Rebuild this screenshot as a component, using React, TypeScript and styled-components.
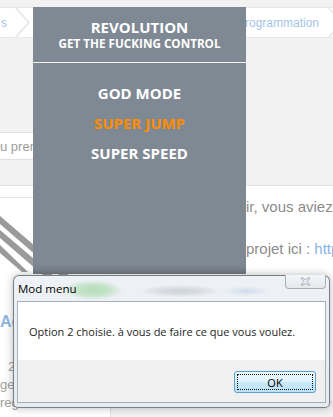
import React from 'react';
import styled, { createGlobalStyle } from 'styled-components';

const Global = createGlobalStyle`
  html, body { margin: 0; padding: 0; }
  body { background: #f2f2f2; font-family: "Liberation Sans", Arial, sans-serif; }
`;

const Screen = styled.div`
  position: relative;
  width: 333px;
  height: 417px;
  overflow: hidden;
  background: #f2f2f2;
`;

const Page = styled.div`
  display: flex;
  flex-direction: column;
  padding-top: 7px;
`;

const Breadcrumb = styled.nav`
  height: 29px;
  background: #fff;
  border-top: 1px solid #e8e8e8;
  border-bottom: 1px solid #e8e8e8;
  display: flex;
  align-items: center;
  font-size: 12px;
  color: #a5c4ea;
`;

const Crumb = styled.span<{ $pl?: number; $pr?: number }>`
  padding-left: ${(p) => p.$pl ?? 0}px;
  padding-right: ${(p) => p.$pr ?? 0}px;
  white-space: nowrap;
`;

const Spacer = styled.div`
  flex: 1;
`;

const Chevron = ({ w = 17 }: { w?: number }) => (
  <svg width={w} height="29" viewBox={`0 0 ${w} 29`} style={{ flex: 'none' }}>
    <polyline points="1,-1 15,14.5 1,30" fill="none" stroke="#e4e4e4" strokeWidth="1.4" />
  </svg>
);

const SearchRow = styled.div`
  margin-top: 94px;
  display: flex;
`;

const SearchInput = styled.div`
  width: 40px;
  height: 26px;
  background: #fff;
  border: 1px solid #e0e0e0;
  border-left: none;
  display: flex;
  align-items: center;
  font-size: 13px;
  color: #9c9c9c;
  white-space: nowrap;
  overflow: hidden;
`;

const Content = styled.div`
  margin-top: 25px;
  display: flex;
  height: 240px;
`;

const Sidebar = styled.aside`
  width: 110px;
  background: #fff;
  border-top: 1px solid #e2e2e2;
  border-right: 1px solid #e2e2e2;
  display: flex;
  flex-direction: column;
`;

const SideHeader = styled.div`
  height: 11px;
  border-bottom: 1px solid #e4e4e4;
`;

const Stripes = styled.div`
  margin-top: 18px;
  height: 60px;
`;

const SideTitle = styled.div`
  margin-top: 36px;
  width: 14px;
  overflow: hidden;
  line-height: 20px;
  font-size: 16px;
  font-weight: 700;
  color: #8fb6df;
  white-space: nowrap;
`;

const StatList = styled.div`
  margin-top: 26px;
  display: flex;
  flex-direction: column;
`;

const Stat = styled.div<{ $pl?: number }>`
  line-height: 18px;
  font-size: 13px;
  color: #a0a0a0;
  padding-left: ${(p) => p.$pl ?? 0}px;
  white-space: nowrap;
`;

const Main = styled.main`
  flex: 1;
  min-width: 0;
  display: flex;
  flex-direction: column;
`;

const Card = styled.div`
  height: 215px;
  background: #fff;
  border-top: 1px solid #e2e2e2;
  padding: 11px 0 0 135px;
  box-sizing: border-box;
  display: flex;
  flex-direction: column;
  gap: 22px;
  overflow: hidden;
`;

const Line = styled.p`
  margin: 0;
  line-height: 20px;
  font-size: 15px;
  color: #8c8c8c;
  white-space: nowrap;
`;

const Link = styled.span`
  color: #86b3e3;
`;

/* ---------- Mod menu overlay ---------- */

const Panel = styled.div`
  position: absolute;
  left: 33px;
  top: 7px;
  width: 213px;
  height: 267px;
  background: linear-gradient(to bottom, #7f8994 0%, #7f8994 96%, #717a84 100%);
  font-family: "Open Sans", "Noto Sans", sans-serif;
  color: #fff;
  display: flex;
  flex-direction: column;
  text-align: center;
`;

const PanelHeader = styled.header`
  height: 56px;
  box-sizing: border-box;
  padding-top: 11px;
  border-bottom: 1px solid #f2f2f2;
`;

const PanelTitle = styled.div`
  font-weight: 700;
  font-size: 15px;
  line-height: 18px;
`;

const PanelSub = styled.div`
  font-weight: 700;
  font-size: 11.7px;
  line-height: 14px;
`;

const Menu = styled.ul`
  list-style: none;
  margin: 0;
  padding: 15px 0 0;
`;

const MenuItem = styled.li<{ $active?: boolean }>`
  font-weight: 700;
  font-size: 15px;
  line-height: 30px;
  color: ${(p) => (p.$active ? '#ff8c00' : '#ffffff')};
`;

/* ---------- Windows dialog ---------- */

const Dialog = styled.div`
  position: absolute;
  left: 13px;
  top: 275px;
  width: 317px;
  height: 133px;
  box-sizing: border-box;
  border: 1px solid rgba(90, 98, 108, 0.8);
  border-radius: 6px 6px 5px 5px;
  padding: 0 3px 4px 3px;
  display: flex;
  flex-direction: column;
  box-shadow: 0 0 9px rgba(0, 0, 0, 0.28);
  background:
    radial-gradient(ellipse 30px 10px at 79px 14px, rgba(150, 210, 150, 0.65) 0%, rgba(150, 210, 150, 0.45) 55%, rgba(150, 210, 150, 0) 100%),
    radial-gradient(ellipse 40px 6px at 166px 15px, rgba(160, 165, 175, 0.4) 0%, rgba(160, 165, 175, 0.25) 55%, rgba(160, 165, 175, 0) 100%),
    radial-gradient(ellipse 24px 5px at 232px 15px, rgba(150, 180, 215, 0.35) 0%, rgba(150, 180, 215, 0) 100%),
    linear-gradient(to bottom, #eef2f6 0%, #e6ebf0 100%);
  font-family: "Open Sans", "Noto Sans", sans-serif;
  color: #000;
`;

const TitleBar = styled.div`
  height: 25px;
  display: flex;
  align-items: center;
  padding-left: 1px;
`;

const DialogTitle = styled.span`
  font-size: 11.5px;
  flex: 1;
`;

const CloseButton = styled.div`
  align-self: flex-start;
  margin-top: -1px;
  width: 41px;
  height: 14px;
  box-sizing: border-box;
  border: 1px solid #a8aeb5;
  border-top: none;
  border-radius: 0 0 4px 4px;
  background: linear-gradient(to bottom, #f4f6f8, #e3e8ed);
  display: flex;
  align-items: center;
  justify-content: center;
`;

const Client = styled.div`
  flex: 1;
  border: 1px solid #a7afb8;
  display: flex;
  flex-direction: column;
`;

const MessageArea = styled.div`
  height: 58px;
  background: #fff;
  display: flex;
  align-items: center;
  padding-left: 11px;
  font-size: 11px;
  color: #1e1e1e;
`;

const Footer = styled.div`
  flex: 1;
  background: #f0f0f0;
  display: flex;
  justify-content: flex-end;
  align-items: flex-start;
  padding: 11px 9px 0 0;
`;

const OkButton = styled.button`
  width: 82px;
  height: 22px;
  box-sizing: border-box;
  padding: 2px;
  border: 1px solid #5a9fd0;
  border-radius: 3px;
  background: linear-gradient(to bottom, #eef8fd 0%, #e0f2fc 48%, #cbe9f9 52%, #b9e1f6 100%);
  font-family: "Open Sans", "Noto Sans", sans-serif;
  font-size: 11px;
  color: #000;
  display: flex;
`;

const Focus = styled.span`
  flex: 1;
  border: 1px dotted #111;
  display: flex;
  align-items: center;
  justify-content: center;
  line-height: 1;
`;

export default function App() {
  return (
    <>
      <Global />
      <Screen>
        <Page>
          <Breadcrumb>
            <Crumb $pl={1} $pr={7}>s</Crumb>
            <Chevron />
            <Spacer />
            <Crumb $pr={8}>rogrammation</Crumb>
            <Chevron w={6} />
          </Breadcrumb>
          <SearchRow>
            <SearchInput>u premier</SearchInput>
          </SearchRow>
          <Content>
            <Sidebar>
              <SideHeader />
              <Stripes>
                <svg width="110" height="60" viewBox="0 0 110 60">
                  <polygon points="0,0 0,8 60,60 70,60" fill="#9a9a9a" />
                  <polygon points="0,14 0,22 44,60 54,60" fill="#9a9a9a" />
                  <polygon points="0,29 0,37 22,56 28,56" fill="#9a9a9a" />
                </svg>
              </Stripes>
              <SideTitle>Aeris</SideTitle>
              <StatList>
                <Stat $pl={8}>2</Stat>
                <Stat>ges</Stat>
                <Stat>regist</Stat>
              </StatList>
            </Sidebar>
            <Main>
              <Card>
                <Line>ir, vous aviez demandé</Line>
                <Line>
                  projet ici : <Link>https://</Link>
                </Line>
              </Card>
            </Main>
          </Content>
        </Page>

        <Panel>
          <PanelHeader>
            <PanelTitle>REVOLUTION</PanelTitle>
            <PanelSub>GET THE FUCKING CONTROL</PanelSub>
          </PanelHeader>
          <Menu>
            <MenuItem>GOD MODE</MenuItem>
            <MenuItem $active>SUPER JUMP</MenuItem>
            <MenuItem>SUPER SPEED</MenuItem>
          </Menu>
        </Panel>

        <Dialog>
          <TitleBar>
            <DialogTitle>Mod menu</DialogTitle>
            <CloseButton>
              <svg width="11" height="9" viewBox="0 0 11 9">
                <path
                  d="M1,1 L3.5,1 L5.5,3 L7.5,1 L10,1 L7,4.5 L10,8 L7.5,8 L5.5,6 L3.5,8 L1,8 L4,4.5 Z"
                  fill="#f4f4f4"
                  stroke="#9aa1a9"
                  strokeWidth="0.9"
                />
              </svg>
            </CloseButton>
          </TitleBar>
          <Client>
            <MessageArea>Option 2 choisie. à vous de faire ce que vous voulez.</MessageArea>
            <Footer>
              <OkButton>
                <Focus>OK</Focus>
              </OkButton>
            </Footer>
          </Client>
        </Dialog>
      </Screen>
    </>
  );
}
